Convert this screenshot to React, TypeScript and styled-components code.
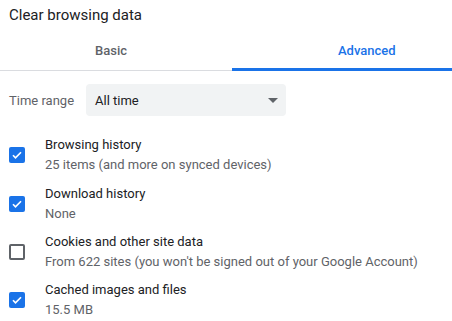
import React, { useState } from 'react';
import styled, { createGlobalStyle } from 'styled-components';

const GlobalStyle = createGlobalStyle`
  html, body {
    margin: 0;
    padding: 0;
    background: #fff;
  }
  body {
    font-family: Roboto, 'Noto Sans', 'Liberation Sans', sans-serif;
    -webkit-font-smoothing: antialiased;
  }
`;

const items = [
  { id: 'history', title: 'Browsing history', sub: '25 items (and more on synced devices)', checked: true },
  { id: 'downloads', title: 'Download history', sub: 'None', checked: true },
  {
    id: 'cookies',
    title: 'Cookies and other site data',
    sub: "From 622 sites (you won't be signed out of your Google Account)",
    checked: false,
  },
  { id: 'cache', title: 'Cached images and files', sub: '15.5 MB', checked: true },
];

const App = () => {
  const [tab, setTab] = useState<'basic' | 'advanced'>('advanced');
  const [checks, setChecks] = useState<Record<string, boolean>>(() =>
    Object.fromEntries(items.map((i) => [i.id, i.checked]))
  );

  const toggle = (id: string): void => {
    setChecks((p) => ({ ...p, [id]: !p[id] }));
  };

  return (
    <Dialog>
      <GlobalStyle />
      <Title>Clear browsing data</Title>
      <Tabs>
        <Tab
          width="232px"
          textOffset="95px"
          active={tab === 'basic'}
          onClick={() => setTab('basic')}
        >
          Basic
        </Tab>
        <Tab
          textOffset="106px"
          active={tab === 'advanced'}
          onClick={() => setTab('advanced')}
        >
          Advanced
        </Tab>
      </Tabs>
      <RangeRow>
        <RangeLabel>Time range</RangeLabel>
        <Select>
          <span>All time</span>
          <Arrow />
        </Select>
      </RangeRow>
      <List>
        {items.map((item) => (
          <Row key={item.id} onClick={() => toggle(item.id)}>
            <Checkbox checked={checks[item.id]}>
              {checks[item.id] ? (
                <svg width="12" height="12" viewBox="0 0 24 24">
                  <path
                    d="M4 12.5l5 5L20 6.5"
                    fill="none"
                    stroke="#fff"
                    strokeWidth="3.4"
                  />
                </svg>
              ) : null}
            </Checkbox>
            <Labels>
              <ItemTitle>{item.title}</ItemTitle>
              <ItemSub>{item.sub}</ItemSub>
            </Labels>
          </Row>
        ))}
      </List>
    </Dialog>
  );
};

export default App;

const Dialog = styled.div`
  width: 452px;
  height: 321px;
  overflow: hidden;
  background: #fff;
`;

const Title = styled.div`
  padding: 5px 0 0 9px;
  height: 25px;
  line-height: 20px;
  font-size: 15px;
  color: #202124;
`;

const Tabs = styled.div`
  display: flex;
  height: 41px;
  border-bottom: 1px solid #dadce0;
  box-sizing: border-box;
`;

const Tab = styled.div<{ active?: boolean; width?: string; textOffset: string }>`
  flex: ${(p) => (p.width ? `0 0 ${p.width}` : '1')};
  display: flex;
  align-items: center;
  justify-content: flex-start;
  box-sizing: border-box;
  padding-left: ${(p) => p.textOffset};
  padding-bottom: 1px;
  margin-bottom: -1px;
  font-size: 13px;
  font-weight: 500;
  color: ${(p) => (p.active ? '#1a73e8' : '#5f6368')};
  box-shadow: ${(p) => (p.active ? 'inset 0 -3px 0 #1a73e8' : 'none')};
  cursor: pointer;
`;

const RangeRow = styled.div`
  display: flex;
  align-items: center;
  margin-top: 13px;
  padding-left: 9px;
`;

const RangeLabel = styled.div`
  width: 77px;
  font-size: 13px;
  color: #5f6368;
`;

const Select = styled.div`
  width: 200px;
  height: 32px;
  box-sizing: border-box;
  padding: 0 8px 0 9px;
  border-radius: 4px;
  background: #f1f3f4;
  display: flex;
  align-items: center;
  justify-content: space-between;
  font-size: 13px;
  color: #202124;
`;

const Arrow = styled.div`
  width: 0;
  height: 0;
  border-left: 5px solid transparent;
  border-right: 5px solid transparent;
  border-top: 5px solid #5f6368;
`;

const List = styled.div`
  display: flex;
  flex-direction: column;
  margin-top: 15px;
`;

const Row = styled.div`
  display: flex;
  align-items: center;
  height: 48.4px;
  padding-left: 9px;
  cursor: pointer;
`;

const Checkbox = styled.div<{ checked?: boolean }>`
  width: 16px;
  height: 16px;
  box-sizing: border-box;
  border-radius: 2px;
  flex-shrink: 0;
  display: flex;
  align-items: center;
  justify-content: center;
  background: ${(p) => (p.checked ? '#1a73e8' : 'transparent')};
  border: ${(p) => (p.checked ? 'none' : '2px solid #5f6368')};
  margin-right: 20px;
`;

const Labels = styled.div`
  display: flex;
  flex-direction: column;
`;

const ItemTitle = styled.div`
  font-size: 13px;
  line-height: 20px;
  color: #202124;
`;

const ItemSub = styled.div`
  font-size: 13px;
  line-height: 20px;
  color: #5f6368;
`;
